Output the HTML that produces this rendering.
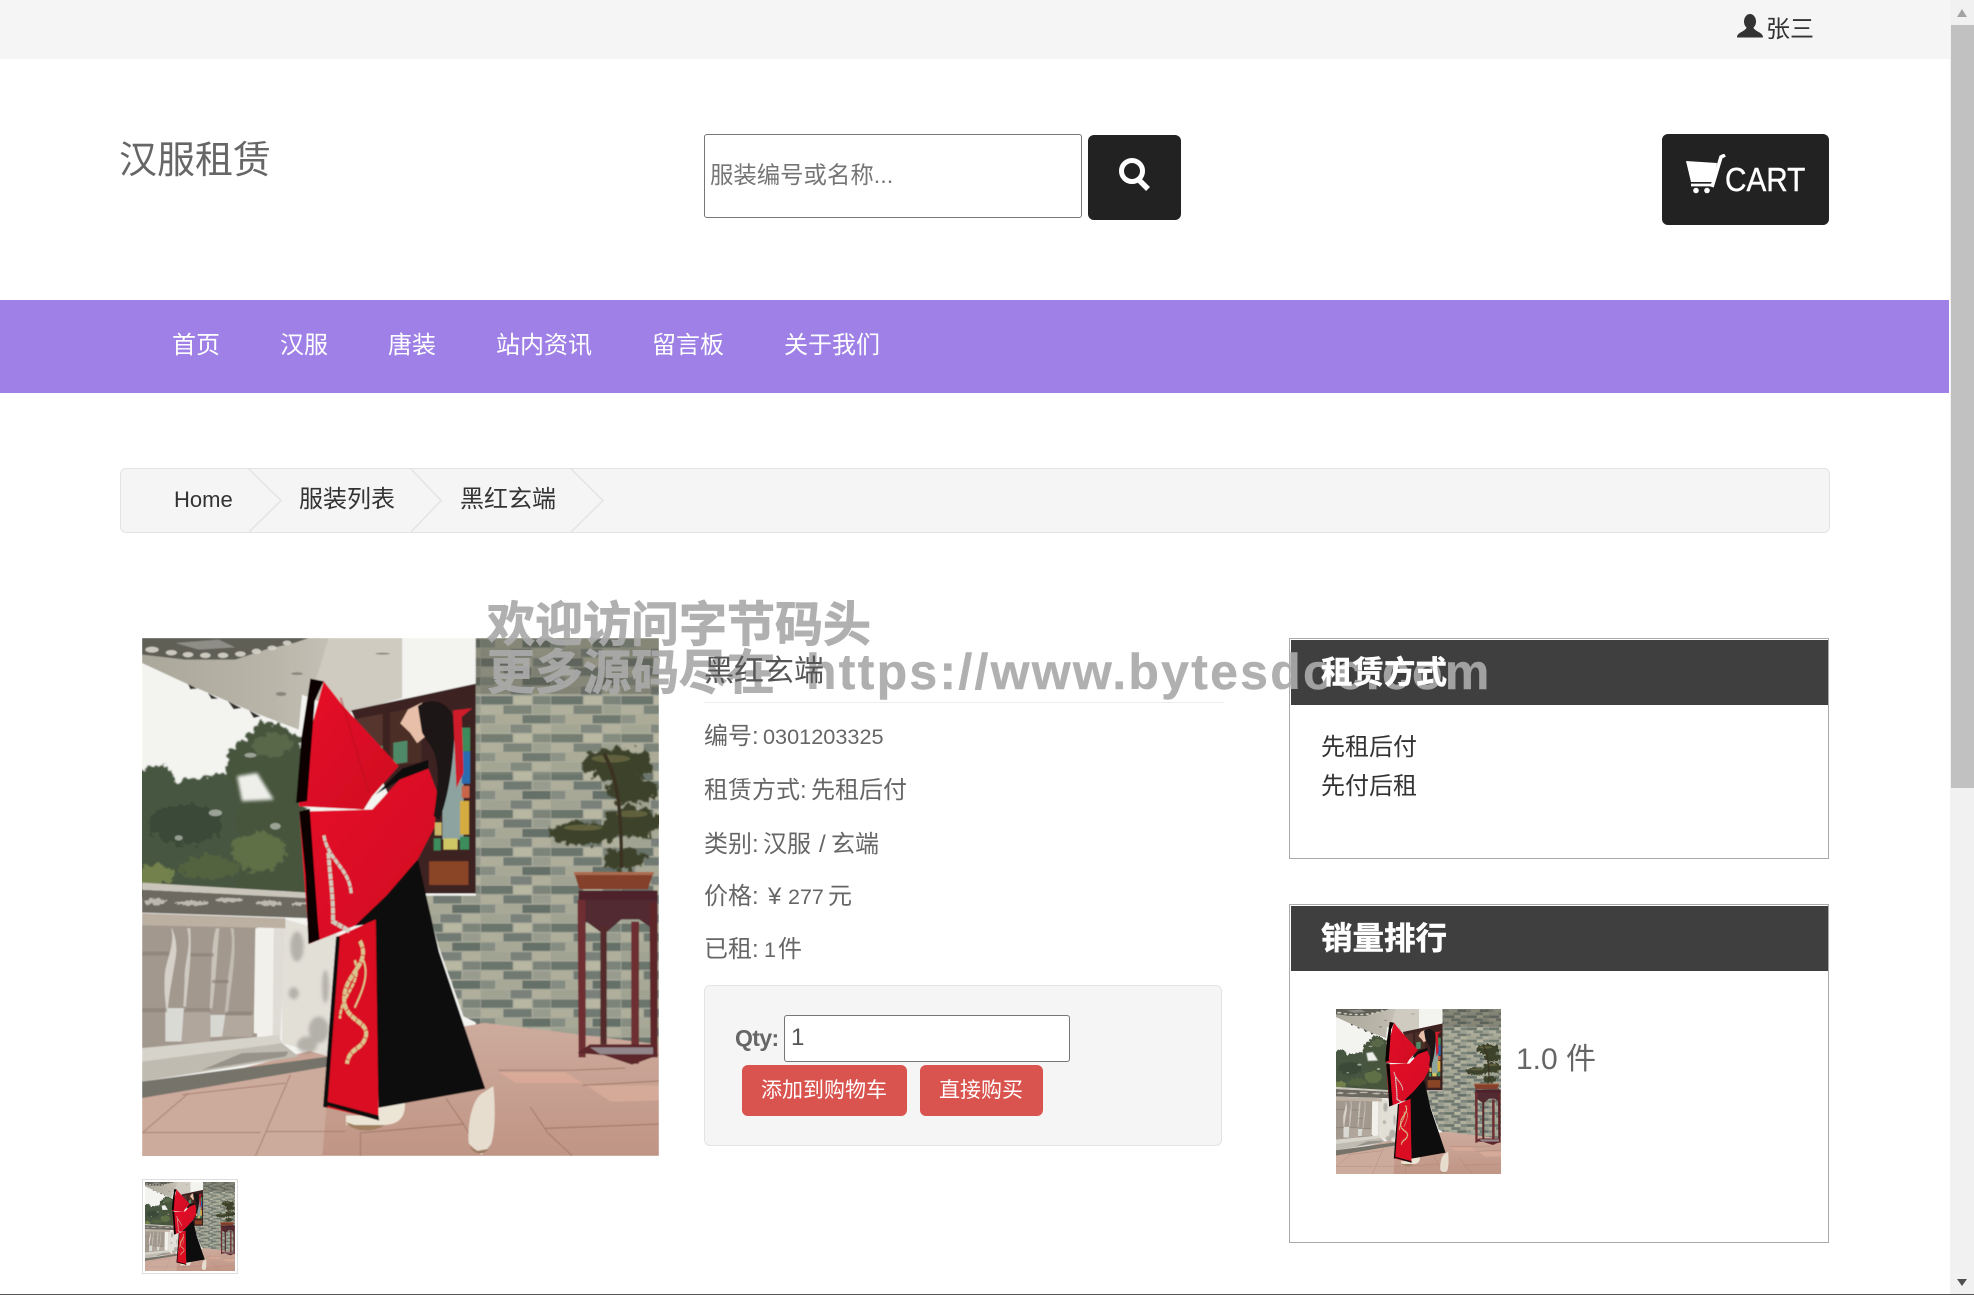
<!DOCTYPE html>
<html lang="zh-CN">
<head>
<meta charset="utf-8">
<title>汉服租赁</title>
<style>
html,body{margin:0;padding:0;background:#fff}
body{position:relative;width:1974px;height:1295px;overflow:hidden;font-family:"Liberation Sans","Noto Sans CJK SC",sans-serif;color:#666}
.a{position:absolute;white-space:nowrap;box-sizing:border-box}
.t{position:absolute;white-space:nowrap;height:40px;line-height:40px;font-size:24px}
svg{display:block}
.wm{font-size:48px;font-weight:700;color:#aaa;opacity:.92;-webkit-text-stroke:.9px #aaa;height:60px;line-height:60px}
</style>
</head>
<body>
<svg width="0" height="0" style="position:absolute">
<defs>
<pattern id="brick" width="200" height="88" patternUnits="userSpaceOnUse">
<rect width="200" height="88" fill="#a8a99a"/>
<rect x="0" y="1" width="90" height="19" fill="#6a746c"/><rect x="94" y="1" width="50" height="19" fill="#b8b7a2"/><rect x="148" y="1" width="50" height="19" fill="#7c847a"/>
<rect x="0" y="23" width="60" height="19" fill="#aeae9b"/><rect x="64" y="23" width="80" height="19" fill="#717a72"/><rect x="148" y="23" width="50" height="19" fill="#989c8e"/>
<rect x="0" y="45" width="40" height="19" fill="#858c82"/><rect x="44" y="45" width="70" height="19" fill="#a8a896"/><rect x="118" y="45" width="80" height="19" fill="#656f68"/>
<rect x="0" y="67" width="80" height="19" fill="#a0a292"/><rect x="84" y="67" width="60" height="19" fill="#79817a"/><rect x="148" y="67" width="50" height="19" fill="#b0af9c"/>
</pattern>
<linearGradient id="roof" x1="0" y1="0" x2="1" y2="0"><stop offset="0" stop-color="#aaa79b"/><stop offset=".5" stop-color="#b9b5a9"/><stop offset="1" stop-color="#d2cec4"/></linearGradient>
<linearGradient id="floor" x1="0" y1="0" x2="0" y2="1"><stop offset="0" stop-color="#cdab9d"/><stop offset="1" stop-color="#c09585"/></linearGradient>
<linearGradient id="sleeve" x1="0" y1="0" x2="1" y2="1"><stop offset="0" stop-color="#e8102a"/><stop offset="1" stop-color="#cf0c22"/></linearGradient>
<filter id="soft" x="0" y="0" width="1" height="1"><feGaussianBlur stdDeviation="1.2"/></filter>
<filter id="blur3" x="-20%" y="-20%" width="140%" height="140%"><feGaussianBlur stdDeviation="5"/></filter>
<filter id="leaf" x="-10%" y="-10%" width="120%" height="120%"><feTurbulence type="fractalNoise" baseFrequency=".05" numOctaves="3" seed="4" result="n"/><feDisplacementMap in="SourceGraphic" in2="n" scale="40" xChannelSelector="R" yChannelSelector="G"/><feGaussianBlur stdDeviation="1.5"/></filter>
<filter id="rough" x="-5%" y="-5%" width="110%" height="110%"><feTurbulence type="fractalNoise" baseFrequency=".09" numOctaves="2" seed="9" result="n"/><feDisplacementMap in="SourceGraphic" in2="n" scale="14" xChannelSelector="R" yChannelSelector="G"/></filter>
<symbol id="photo" viewBox="34 42 1473 1202" preserveAspectRatio="none">
<g filter="url(#soft)">
<rect x="34" y="42" width="1473" height="1202" fill="#f3f3f0"/>

<!-- trees, roof: coordinates of upper-left crop -->
<g transform="matrix(.95 0 0 .773 34 42)">
<g filter="url(#leaf)">
<path d="M255 345L340 270L365 245L480 295L500 770L240 770Z" fill="#46553e"/>
<path d="M-30 400L70 380L100 430L170 420L250 410L290 470L280 780L-30 780Z" fill="#465640"/>
<ellipse cx="390" cy="320" rx="60" ry="35" fill="#586848"/>
<ellipse cx="130" cy="560" rx="110" ry="60" fill="#3b4a37"/>
<ellipse cx="350" cy="640" rx="80" ry="60" fill="#5e6f46"/>
<ellipse cx="40" cy="710" rx="55" ry="30" fill="#73824e"/>
<ellipse cx="200" cy="690" rx="90" ry="35" fill="#52633f"/>
</g>
<path d="M285 415L345 405L395 485L300 490Z" fill="#eeefeb" filter="url(#blur3)"/>
<g fill="#dfe2db" opacity=".55"><ellipse cx="325" cy="352" rx="18" ry="7"/><ellipse cx="110" cy="600" rx="12" ry="8"/><ellipse cx="220" cy="525" rx="20" ry="10"/><ellipse cx="400" cy="565" rx="16" ry="10"/></g>
<path d="M0 0H780V180L620 225L480 170L470 275L340 225L140 140L0 75Z" fill="url(#roof)"/>
<path d="M780 0V178L620 225L520 130L560 0Z" fill="#cfcbc0"/>
<path d="M0 0H500L460 14L370 35L280 65L130 65L0 50Z" fill="#5f5e56"/>
<g fill="#d8d5cb" opacity=".9"><ellipse cx="30" cy="35" rx="20" ry="9"/><ellipse cx="88" cy="44" rx="17" ry="8"/><ellipse cx="138" cy="50" rx="16" ry="8"/><ellipse cx="190" cy="52" rx="16" ry="8"/><ellipse cx="243" cy="52" rx="16" ry="8"/><ellipse cx="295" cy="48" rx="16" ry="8"/><ellipse cx="343" cy="40" rx="14" ry="8"/><ellipse cx="390" cy="30" rx="14" ry="7"/><ellipse cx="435" cy="15" rx="13" ry="7"/></g>
<g fill="#9a9a94" opacity=".8"><path d="M100 15L230 5L280 28L170 35Z"/></g>
<g fill="#332f2c"><path d="M138 138L165 152L145 154Z"/><path d="M198 165L228 182L208 183Z"/><path d="M258 190L298 210L275 214Z"/><path d="M322 218L355 235L335 240Z"/></g>
<g fill="#6f6c64" opacity=".65"><ellipse cx="417" cy="168" rx="16" ry="6"/><ellipse cx="465" cy="107" rx="18" ry="4"/><ellipse cx="722" cy="47" rx="22" ry="3"/></g>
</g>

<!-- wall and window -->
<rect x="985" y="42" width="522" height="950" fill="url(#brick)"/>
<path d="M840 640H1000V940L950 920L880 760Z" fill="url(#brick)"/>
<rect x="985" y="42" width="522" height="130" fill="#4a4a40" opacity=".35"/>
<path d="M985 200H1507V360H985Z" fill="#c6c4a8" opacity=".12"/>
<path d="M630 210L985 148V635H830L820 560Z" fill="#3d2320"/>
<path d="M640 230L720 218V300L640 310Z" fill="#55352e"/><path d="M740 215L830 200V330L740 340Z" fill="#4b2d28"/>
<path d="M750 285L790 280V330L750 335Z" fill="#4f8a68"/><path d="M690 295L720 292V320L695 325Z" fill="#4f8a68"/>
<rect x="890" y="260" width="60" height="250" fill="#8da3a0"/>
<rect x="945" y="250" width="24" height="55" fill="#3d8c5c"/><rect x="945" y="305" width="24" height="75" fill="#2c6cb0"/><rect x="945" y="385" width="22" height="28" fill="#c8654a"/><rect x="940" y="420" width="26" height="78" fill="#d4ac40"/><rect x="940" y="503" width="26" height="30" fill="#3d8c5c"/><rect x="893" y="507" width="40" height="26" fill="#cfc665"/><rect x="865" y="507" width="20" height="28" fill="#3d8c5c"/><rect x="868" y="470" width="20" height="30" fill="#c9b66a"/>
<rect x="852" y="560" width="112" height="55" fill="#8a4526"/>

<!-- floor -->
<path d="M940 945L1010 935L1507 985V1244H34V1100L560 990Z" fill="url(#floor)"/>
<g stroke="#94695a" stroke-width="2.5" fill="none" opacity=".7"><path d="M660 1190L950 1170L1000 1244"/><path d="M1050 1045H1260L1410 1040"/><path d="M1140 1130L1190 1190L1260 1244M1180 1180L1507 1170"/><path d="M1290 1080L1507 1070"/><path d="M900 1110L950 1170"/></g>
<path d="M1050 1050H1240L1290 1075H1100Z" fill="#dcab98" opacity=".8"/>
<path d="M1300 1080H1507V1115L1370 1118Z" fill="#d8ad9b" opacity=".8"/>

<!-- balustrade and floor: coordinates of lower-left crop -->
<g transform="matrix(.95 0 0 .773 34 603.4)">
<path d="M0 135H345V490L0 505Z" fill="#a2988e"/>
<path d="M420 115L590 165L560 530L420 490Z" fill="#e2dfd7"/>
<g fill="#716e66" opacity=".4" filter="url(#blur3)"><ellipse cx="455" cy="340" rx="15" ry="18"/><ellipse cx="465" cy="200" rx="20" ry="45"/><ellipse cx="550" cy="320" rx="10" ry="50"/><ellipse cx="530" cy="450" rx="30" ry="40"/><ellipse cx="495" cy="495" rx="30" ry="25"/></g>
<path d="M340 145H425L415 470L335 460Z" fill="#f2f0ea"/>
<path d="M395 145H428L415 480L392 470Z" fill="#dedcd4"/>
<path d="M88 145C100 200 70 240 68 290C66 340 70 360 72 385H78C82 340 90 300 100 240C108 200 100 170 90 145Z" fill="#d5d0c8"/>
<path d="M135 145C150 200 125 250 128 300L124 380H132C138 300 150 240 145 145Z" fill="#cfcac2"/>
<path d="M222 145C205 200 210 300 202 395H210C222 300 225 220 232 145Z" fill="#c8c2b9"/>
<path d="M265 145C280 200 255 280 254 340L248 400H258C262 340 285 240 275 145Z" fill="#c2bbb2"/>
<path d="M70 385H130V485L70 485Z" fill="#dadad5"/><path d="M205 405H250V470L205 472Z" fill="#d8d8d2"/>
<path d="M125 390H205V488H118Z" fill="#b0a69c"/><path d="M250 405H335L330 470H240Z" fill="#b2a89e"/>
<g fill="#857b72" opacity=".55"><rect x="0" y="215" width="82" height="12"/><rect x="0" y="385" width="75" height="12"/><rect x="125" y="385" width="85" height="12"/><rect x="250" y="395" width="80" height="12"/><rect x="145" y="220" width="70" height="10"/><rect x="210" y="300" width="50" height="10"/></g>
<path d="M0 8L500 38V55L0 30Z" fill="#c9c5ba"/>
<path d="M0 30L505 55V115L0 98Z" fill="#6c6961"/>
<g fill="#bcb8ae" filter="url(#rough)"><ellipse cx="40" cy="65" rx="35" ry="10"/><ellipse cx="150" cy="70" rx="50" ry="7"/><ellipse cx="260" cy="60" rx="40" ry="7"/><ellipse cx="380" cy="70" rx="40" ry="8"/><ellipse cx="470" cy="72" rx="25" ry="5"/></g>
<path d="M0 100L430 115V145L0 136Z" fill="#bbb0a2"/>
<path d="M0 505L410 465L420 490L0 545Z" fill="#d6d3ca"/>
<path d="M0 545L420 490L470 530L0 605Z" fill="#bfbbb0"/>
<path d="M180 570L430 530L440 515L300 520Z" fill="#86827a" opacity=".7"/>
<path d="M0 605L560 530V560L0 655Z" fill="#76736a"/>
<path d="M0 655L560 560V600L540 840H0Z" fill="#ccaa9c"/>
<g stroke="#9a6f60" stroke-width="3" fill="none" opacity=".7"><path d="M0 758H355"/><path d="M0 760L140 640"/><path d="M340 830L445 585"/><path d="M372 755H610"/><path d="M120 645L430 610"/><path d="M655 755V840"/></g>
</g>

<!-- bonsai and stand -->
<g filter="url(#leaf)" fill="#3e4229"><ellipse cx="1390" cy="335" rx="100" ry="36"/><ellipse cx="1430" cy="395" rx="75" ry="30"/><ellipse cx="1290" cy="495" rx="100" ry="26"/><ellipse cx="1430" cy="470" rx="85" ry="36"/><ellipse cx="1410" cy="555" rx="60" ry="26"/></g>
<g fill="#7f7a50" opacity=".55"><ellipse cx="1370" cy="322" rx="55" ry="9"/><ellipse cx="1290" cy="482" rx="55" ry="7"/><ellipse cx="1430" cy="450" rx="45" ry="8"/></g>
<path d="M1350 310C1385 360 1400 420 1400 575" stroke="#3a3022" stroke-width="10" fill="none"/>
<path d="M1265 585H1492L1475 625H1280Z" fill="#84402c"/>
<path d="M1265 585H1492V592H1265Z" fill="#ac6a50"/>
<rect x="1278" y="628" width="225" height="25" fill="#4d2329"/>
<path d="M1278 650H1503L1495 720L1450 695H1400L1350 730L1300 700L1285 720Z" fill="#512a30"/>
<path d="M1275 650H1298V1015H1278Z" fill="#6e2f32"/><path d="M1428 700H1450V1030H1428Z" fill="#6e2f32"/><path d="M1480 655H1503V1015H1483Z" fill="#5e272c"/><rect x="1340" y="710" width="18" height="275" fill="#542a2b"/>
<path d="M1275 1005L1310 985H1490L1505 1010L1430 1032L1350 1010Z" fill="#5c2529"/>
<path d="M1310 992H1490V1008H1340Z" fill="#92868a"/>

<!-- shoes -->
<path d="M965 1215C960 1170 975 1115 1000 1100L1035 1082C1042 1140 1040 1195 1025 1225L1000 1242Z" fill="#e6ddcf"/>
<path d="M968 1222C985 1245 1015 1245 1030 1215L1018 1228L990 1232Z" fill="#9b7a5c"/>
<path d="M700 1120H783C785 1150 770 1172 720 1172L615 1172L615 1150L660 1150Z" fill="#ece5d5"/>
<path d="M613 1165C640 1192 700 1188 725 1172L640 1172Z" fill="#a08060"/>

<!-- figure -->
<path d="M820 555L880 770L1012 1088L708 1132L690 705L640 710Z" fill="#0c0a0b"/>
<path d="M590 735L700 695L708 1160L552 1130Z" fill="#da0d22"/>
<path d="M587 735L550 1130L562 1132L598 735Z" fill="#080707"/>
<path d="M552 1125L710 1162L708 1150L562 1118Z" fill="#0d0808"/>
<g fill="none" stroke="#d9c48e"><path d="M655 745C690 800 610 820 610 880C610 930 680 930 672 965C662 1000 625 990 618 1030" stroke-width="11" stroke-dasharray="16 2"/><path d="M640 790C665 840 600 870 598 925" stroke-width="7" stroke-dasharray="12 2"/><path d="M665 790C685 830 650 880 640 900" stroke-width="5"/></g>
<g transform="matrix(.95 0 0 .773 34 42)">
<path d="M545 130L600 200L770 385L690 475L665 515L470 505L500 300Z" fill="url(#sleeve)"/>
<path d="M505 122L545 130L518 190L495 490L462 495L478 300Z" fill="#070606"/>
</g>
<path d="M482 445L690 440L780 360L850 345L875 400L868 480L820 555L730 640L640 710L510 752Z" fill="url(#sleeve)"/>
<path d="M482 445L512 438L535 700L540 742L508 752L500 590Z" fill="#080606"/>
<g fill="none" stroke="#cfcabd"><path d="M552 500C565 560 625 575 630 635" stroke-width="9" stroke-dasharray="14 2"/><path d="M565 540C570 600 580 650 578 700L625 722" stroke-width="11" stroke-dasharray="14 2"/></g>
<path d="M700 405L775 345L850 325L850 345L770 370L720 395Z" fill="#0a0808"/>
<path d="M792 208L832 192L842 270L818 286L798 262L770 240Z" fill="#e8bfa8"/>
<path d="M820 200C860 175 930 190 925 260C920 340 905 420 880 465L865 455C880 380 885 320 850 285L832 262Z" fill="#1c1415"/>
<path d="M920 210L975 205L945 225L948 300L950 355L930 390L925 300Z" fill="#cf1a2c"/>
<path d="M600 180L680 400" stroke="#b30a1c" stroke-width="6" opacity=".35"/>
</g>
</symbol>
</defs>
</svg>

<!-- top bar -->
<div class="a" style="left:0;top:0;width:1950px;height:59px;background:#f5f5f5"></div>
<svg class="a" style="left:1737px;top:14px" width="26" height="24" viewBox="0 0 26 24"><ellipse cx="13" cy="7.5" rx="6" ry="7.5" fill="#333"/><path d="M0 23.5C0 18 8 18 10 13L16 13C18 18 26 18 26 23.5Z" fill="#333"/></svg>
<div class="t" style="left:1766px;top:10px;color:#333">张三</div>

<!-- header -->
<div class="t" style="left:119px;top:132px;height:58px;line-height:58px;font-size:38px;color:#666">汉服租赁</div>
<div class="a" style="left:704px;top:134px;width:378px;height:84px;border:1px solid #767676;border-radius:3px;background:#fff"></div>
<div class="t" style="left:710px;top:155px;font-size:23.4px;color:#757575">服装编号或名称...</div>
<div class="a" style="left:1088px;top:135px;width:93px;height:85px;background:#222;border-radius:6px"></div>
<svg class="a" style="left:1118px;top:157px" width="34" height="34" viewBox="0 0 34 34"><circle cx="14" cy="14" r="10.5" fill="none" stroke="#fff" stroke-width="5"/><path d="M21 23L30 32" stroke="#fff" stroke-width="5.5"/></svg>
<div class="a" style="left:1662px;top:134px;width:167px;height:91px;background:#222;border-radius:6px"></div>
<svg class="a" style="left:1686px;top:154px" width="40" height="40" viewBox="0 0 40 40"><path d="M0 7L31 9L27 28L5 28Z" fill="#fff"/><path d="M26 33L35 3L39 1" fill="none" stroke="#fff" stroke-width="3.6"/><path d="M5 31H27" stroke="#fff" stroke-width="2.8"/><circle cx="10" cy="36.5" r="2.8" fill="#fff"/><circle cx="21" cy="36.5" r="2.8" fill="#fff"/></svg>
<div class="t" style="left:1725px;top:160px;font-size:33px;color:#fff;-webkit-text-stroke:.4px #fff;transform:scaleX(.9);transform-origin:0 50%">CART</div>

<!-- nav -->
<div class="a" style="left:0;top:300px;width:1949px;height:93px;background:#9e80e6"></div>
<div class="t" style="left:172px;top:326px;color:#fff">首页</div>
<div class="t" style="left:280px;top:326px;color:#fff">汉服</div>
<div class="t" style="left:388px;top:326px;color:#fff">唐装</div>
<div class="t" style="left:496px;top:326px;color:#fff">站内资讯</div>
<div class="t" style="left:652px;top:326px;color:#fff">留言板</div>
<div class="t" style="left:784px;top:326px;color:#fff">关于我们</div>

<!-- breadcrumb -->
<div class="a" style="left:120px;top:468px;width:1710px;height:65px;background:#f5f5f5;border:1px solid #e3e3e3;border-radius:6px"></div>
<svg class="a" style="left:240px;top:468px" width="380" height="65" viewBox="0 0 380 65"><g fill="none" stroke="#e4e4e4" stroke-width="1.5"><path d="M9 1L41 32.5L9 64"/><path d="M171 1L201 32.5L171 64"/><path d="M331 1L363 32.5L331 64"/></g></svg>
<div class="t" style="left:174px;top:480px;font-size:22px;color:#333">Home</div>
<div class="t" style="left:299px;top:480px;color:#333">服装列表</div>
<div class="t" style="left:460px;top:480px;color:#333">黑红玄端</div>

<!-- product image -->
<svg class="a" style="left:142px;top:638px" width="517" height="518"><use href="#photo" width="517" height="518"/></svg>
<div class="a" style="left:142px;top:1179px;width:96px;height:95px;border:1px solid #ddd;padding:2px;background:#fff"><svg width="90" height="89"><use href="#photo" width="90" height="89"/></svg></div>

<!-- sidebar panels -->
<div class="a" style="left:1289px;top:638px;width:540px;height:221px;border:1px solid #aaa;background:#fff"></div>
<div class="a" style="left:1291px;top:640px;width:537px;height:65px;background:#3f3f3f"></div>
<div class="a" style="left:1289px;top:904px;width:540px;height:339px;border:1px solid #aaa;background:#fff"></div>
<div class="a" style="left:1291px;top:906px;width:537px;height:65px;background:#3f3f3f"></div>

<!-- watermark -->
<div class="a wm" style="left:487px;top:596px">欢迎访问字节码头</div>
<div class="a wm" style="left:487px;top:642px">更多源码尽在<span style="margin-left:31px;font-size:50px;letter-spacing:2.25px;-webkit-text-stroke:.4px #aaa">https://www.bytesdoc.com</span></div>

<!-- product detail -->
<div class="t" style="left:704px;top:652px;font-size:30px;color:#555">黑红玄端</div>
<div class="a" style="left:704px;top:702px;width:520px;height:1px;background:#eee"></div>
<div class="t" style="left:704px;top:717px">编号:</div><div class="t" style="left:763px;top:717px;font-size:21.7px">0301203325</div>
<div class="t" style="left:704px;top:771px">租赁方式:</div><div class="t" style="left:811px;top:771px">先租后付</div>
<div class="t" style="left:704px;top:825px">类别:</div><div class="t" style="left:763px;top:825px">汉服</div><div class="t" style="left:819px;top:825px">/</div><div class="t" style="left:831px;top:825px">玄端</div>
<div class="t" style="left:704px;top:877px">价格:</div><div class="t" style="left:768px;top:877px">¥</div><div class="t" style="left:788px;top:877px;font-size:21.5px">277</div><div class="t" style="left:828px;top:877px">元</div>
<div class="t" style="left:704px;top:930px">已租:</div><div class="t" style="left:764px;top:930px;font-size:21.5px">1</div><div class="t" style="left:778px;top:930px">件</div>

<div class="a" style="left:704px;top:985px;width:518px;height:161px;background:#f5f5f5;border:1px solid #e3e3e3;border-radius:6px"></div>
<div class="t" style="left:735px;top:1018px;font-size:23px;font-weight:700;letter-spacing:-.6px">Qty:</div>
<div class="a" style="left:784px;top:1015px;width:286px;height:47px;background:#fff;border:1px solid #767676;border-radius:3px"></div>
<div class="t" style="left:791px;top:1018px;font-size:24px;color:#555">1</div>
<div class="a" style="left:742px;top:1065px;width:165px;height:51px;background:#d9534f;border-radius:6px"></div>
<div class="t" style="left:761px;top:1071px;font-size:21px;color:#fff">添加到购物车</div>
<div class="a" style="left:920px;top:1065px;width:123px;height:51px;background:#d9534f;border-radius:6px"></div>
<div class="t" style="left:939px;top:1071px;font-size:21px;color:#fff">直接购买</div>

<!-- sidebar content -->
<div class="t" style="left:1321px;top:652px;font-size:31.5px;font-weight:700;color:#fff;-webkit-text-stroke:.5px #fff">租赁方式</div>
<div class="t" style="left:1321px;top:728px;color:#333">先租后付</div>
<div class="t" style="left:1321px;top:767px;color:#333">先付后租</div>
<div class="t" style="left:1321px;top:918px;font-size:31.5px;font-weight:700;color:#fff;-webkit-text-stroke:.5px #fff">销量排行</div>
<svg class="a" style="left:1336px;top:1009px" width="165" height="165"><use href="#photo" width="165" height="165"/></svg>
<div class="t" style="left:1516px;top:1040px;font-size:30px;color:#666">1.0 件</div>

<!-- scrollbar -->
<div class="a" style="left:1950px;top:0;width:24px;height:1295px;background:#f1f1f1"></div>
<div class="a" style="left:1951px;top:25px;width:23px;height:763px;background:#c1c1c1"></div>
<svg class="a" style="left:1950px;top:0" width="24" height="25"><path d="M7 17L12 9L17 17Z" fill="#a3a3a3"/></svg>
<svg class="a" style="left:1950px;top:1270px" width="24" height="24"><path d="M7 9L12 16L17 9Z" fill="#505050"/></svg>
<div class="a" style="left:0;top:1294px;width:1974px;height:1px;background:#555"></div>
</body>
</html>
